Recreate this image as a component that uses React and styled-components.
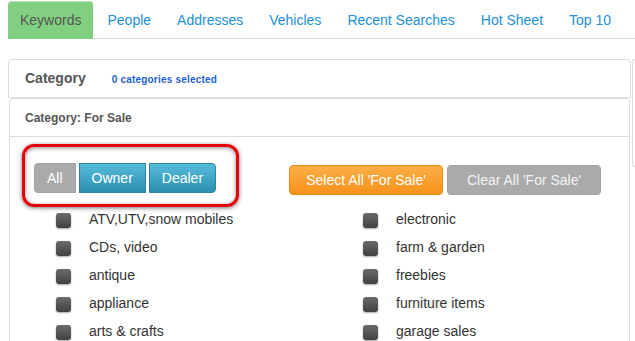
import React from "react";
import styled, { createGlobalStyle, css } from "styled-components";

const Global = createGlobalStyle`
  html, body { margin: 0; padding: 0; overflow: hidden; background: #fff; }
  body { font-family: "Liberation Sans", Arial, sans-serif; font-size: 14px; color: #333; }
  * { box-sizing: border-box; }
`;

const Page = styled.div`
  padding: 1px 0 0 8px;
  height: 341px;
  overflow: hidden;
`;

const Tabs = styled.ul`
  display: flex;
  list-style: none;
  margin: 0;
  padding: 0;
  border-bottom: 1px solid #ddd;
`;

const Tab = styled.li`
  padding: 9px 12px;
  margin-right: 2px;
  margin-bottom: -1px;
  line-height: 20px;
  font-size: 14px;
  border-radius: 4px 4px 0 0;
  color: #2190d9;
  white-space: nowrap;
  ${(p) =>
    p.$active &&
    css`
      background: #81cf81;
      color: #555;
      box-shadow: inset 0 1px 0 #b8e3b8;
    `}
`;

const MainRow = styled.div`
  display: flex;
  align-items: flex-start;
  margin-top: 20px;
`;

const Column = styled.div`
  width: 623px;
  flex: none;
`;

const SidePanel = styled.div`
  flex: 1;
  margin-left: 1px;
  height: 108px;
  border: 1px solid #ddd;
  border-right: none;
  border-radius: 4px 0 0 4px;
`;

const Panel = styled.div`
  border: 1px solid #ddd;
  border-radius: 4px 4px 0 0;
  background: #fff;
`;

const InnerPanel = styled(Panel)`
  margin: 0 1px;
  border-radius: 4px 4px 0 0;
  padding-bottom: 40px;
`;

const Heading = styled.div`
  display: flex;
  align-items: baseline;
  height: 37px;
  padding: 8px 16px 0;
  line-height: 20px;
`;

const HeadTitle = styled.span`
  font-size: 14px;
  font-weight: bold;
  color: #555;
`;

const HeadNote = styled.span`
  margin-left: 26px;
  font-size: 10px;
  line-height: 12px;
  font-weight: bold;
  letter-spacing: 0.2px;
  color: #1d5fd3;
`;

const SubHeading = styled.div`
  height: 38px;
  padding: 9px 15px 0;
  line-height: 20px;
  font-size: 12px;
  font-weight: bold;
  color: #555;
  border-bottom: 1px solid #ddd;
`;

const Body = styled.div`
  padding: 7px 12px 0;
`;

const ButtonRow = styled.div`
  display: flex;
  align-items: flex-start;
`;

const Highlight = styled.div`
  border: 3px solid #e8000b;
  border-radius: 12px;
  padding: 16px 20px 11px 9px;
  box-shadow: 0 1px 4px rgba(0, 0, 0, 0.55), inset 0 1px 4px rgba(0, 0, 0, 0.45);
`;

const Group = styled.div`
  display: flex;
  gap: 3px;
`;

const GroupBtn = styled.button`
  font-family: inherit;
  font-size: 14px;
  line-height: 20px;
  height: 30px;
  padding: 4px 12px;
  color: #fff;
  border: 1px solid #2a86a6;
  background: linear-gradient(#56bcda, #2c8fb0);
  border-radius: 0;
  ${(p) =>
    p.$first &&
    css`
      border-radius: 4px 0 0 4px;
    `}
  ${(p) =>
    p.$last &&
    css`
      border-radius: 0 4px 4px 0;
    `}
  ${(p) =>
    p.$muted &&
    css`
      background: #aaa;
      border-color: #a2a2a2;
    `}
`;

const Actions = styled.div`
  display: flex;
  gap: 4px;
  margin: 21px 0 0 50px;
`;

const ActionBtn = styled.button`
  width: 154px;
  height: 30px;
  font-family: inherit;
  font-size: 14px;
  line-height: 20px;
  padding: 4px 0;
  text-align: center;
  border-radius: 4px;
  color: #fff;
  border: 1px solid ${(p) => (p.$tone === "orange" ? "#e88c14" : "#a3a3a3")};
  background: ${(p) =>
    p.$tone === "orange" ? "linear-gradient(#fbae45, #f7921c)" : "#aaa"};
  ${(p) =>
    p.$tone !== "orange" &&
    css`
      color: #f4f4f4;
    `}
`;

const List = styled.div`
  display: grid;
  grid-template-columns: 307px 307px;
  grid-template-rows: repeat(5, 28px);
  grid-auto-flow: column;
  margin: -1px 0 0 34px;
`;

const Item = styled.label`
  display: flex;
  align-items: center;
  font-size: 14px;
  color: #333;
  line-height: 28px;
`;

const Label = styled.span`
  position: relative;
  top: -1px;
`;

const Box = styled.span`
  width: 15px;
  height: 15px;
  margin: 0 18px 0 0;
  border-radius: 3px;
  background: linear-gradient(#6b6b6b, #414141);
  box-shadow: 0 1px 2px rgba(0, 0, 0, 0.35);
  flex: none;
`;

const tabs = ["Keywords", "People", "Addresses", "Vehicles", "Recent Searches", "Hot Sheet", "Top 10"];
const items = [
  "ATV,UTV,snow mobiles",
  "CDs, video",
  "antique",
  "appliance",
  "arts & crafts",
  "electronic",
  "farm & garden",
  "freebies",
  "furniture items",
  "garage sales",
];

export default function App() {
  return (
    <>
      <Global />
      <Page>
        <Tabs>
          {tabs.map((t, i) => (
            <Tab key={t} $active={i === 0}>
              {t}
            </Tab>
          ))}
        </Tabs>
        <MainRow>
          <Column>
            <Panel>
              <Heading>
                <HeadTitle>Category</HeadTitle>
                <HeadNote>0 categories selected</HeadNote>
              </Heading>
            </Panel>
            <InnerPanel>
              <SubHeading>Category: For Sale</SubHeading>
              <Body>
                <ButtonRow>
                  <Highlight>
                    <Group>
                      <GroupBtn $first $muted>All</GroupBtn>
                      <GroupBtn>Owner</GroupBtn>
                      <GroupBtn $last>Dealer</GroupBtn>
                    </Group>
                  </Highlight>
                  <Actions>
                    <ActionBtn $tone="orange">Select All 'For Sale'</ActionBtn>
                    <ActionBtn $tone="gray">Clear All 'For Sale'</ActionBtn>
                  </Actions>
                </ButtonRow>
                <List>
                  {items.map((it) => (
                    <Item key={it}>
                      <Box />
                      <Label>{it}</Label>
                    </Item>
                  ))}
                </List>
              </Body>
            </InnerPanel>
          </Column>
          <SidePanel />
        </MainRow>
      </Page>
    </>
  );
}
